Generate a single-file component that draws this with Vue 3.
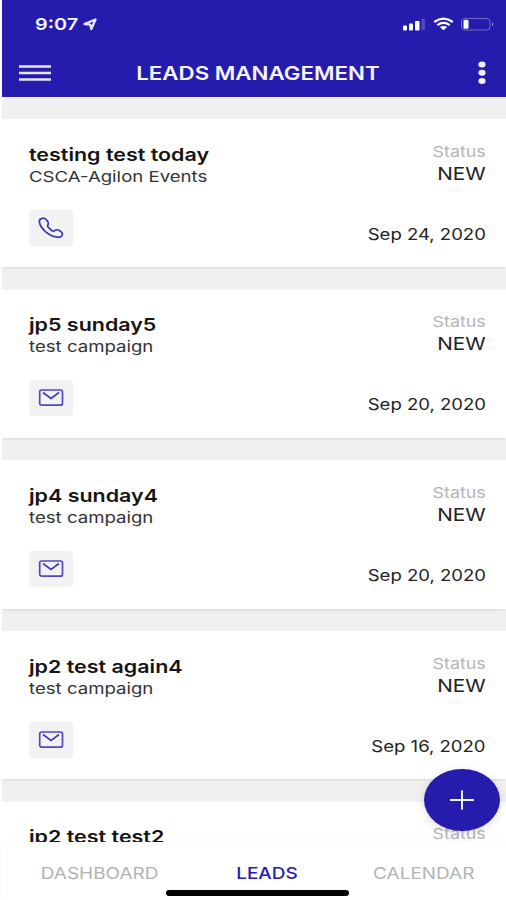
<script setup>
const leads = [
  { name: 'testing test today', campaign: 'CSCA-Agilon Events', date: 'Sep 24, 2020', channel: 'phone' },
  { name: 'jp5 sunday5', campaign: 'test campaign', date: 'Sep 20, 2020', channel: 'mail' },
  { name: 'jp4 sunday4', campaign: 'test campaign', date: 'Sep 20, 2020', channel: 'mail' },
  { name: 'jp2 test again4', campaign: 'test campaign', date: 'Sep 16, 2020', channel: 'mail' },
  { name: 'jp2 test test2', campaign: '', date: '', channel: 'mail' },
]
</script>

<template>
  <div class="screen">
    <header class="top">
      <div class="statusbar">
        <span class="time wide">9:07</span>
        <svg class="loc" viewBox="0 0 14 13"><path d="M1.500 6 12.500 1.500 8.300 11 7.300 6.700Z" fill="none" stroke="#e9e9fb" stroke-width="2.300" stroke-linejoin="round" /></svg>
        <svg class="signals" viewBox="0 0 94 16">
          <g fill="#fff">
            <rect x="2" y="9.500" width="4" height="5" rx="1" />
            <rect x="8" y="7.500" width="4" height="7" rx="1" />
            <rect x="14" y="5" width="4.500" height="9.500" rx="1" />
            <rect x="20.500" y="2.500" width="3.500" height="12" rx="1" opacity=".2" />
          </g>
          <g fill="none" stroke="#fff" stroke-width="2.200">
            <path d="M33.200 6Q42.500-.8 51.800 6" />
            <path d="M36.300 9.100Q42.500 4.800 48.700 9.100" />
          </g>
          <path d="M38.800 11Q42.500 8.800 46.200 11L42.500 14.200Z" fill="#fff" />
          <rect x="60.500" y="2.500" width="28.500" height="11.500" rx="3" fill="none" stroke="#fff" opacity=".34" />
          <rect x="62.500" y="3.800" width="5" height="9" rx="1.500" fill="#fff" />
          <path d="M91 6.300Q93.500 8.300 91 10.300Z" fill="#fff" opacity=".5" />
        </svg>
      </div>
      <div class="navbar">
        <svg class="menu" viewBox="0 0 32 18"><path d="M0 2.500H32M0 9H32M0 15.500H32" stroke="#e6e5fa" stroke-width="2.300" /></svg>
        <h1 class="title wide">LEADS MANAGEMENT</h1>
        <svg class="more" viewBox="0 0 8 24"><g fill="#f1f0ff"><ellipse cx="4" cy="3.500" rx="3.600" ry="3" /><ellipse cx="4" cy="11.800" rx="3.600" ry="3" /><ellipse cx="4" cy="20" rx="3.600" ry="3" /></g></svg>
      </div>
    </header>

    <main class="list">
      <article v-for="lead in leads" :key="lead.name" class="card">
        <div class="row">
          <div class="who">
            <h2 class="name wide">{{ lead.name }}</h2>
            <p class="campaign wide">{{ lead.campaign }}</p>
          </div>
          <div class="state">
            <span class="label wide">Status</span>
            <span v-if="lead.date" class="value wide">NEW</span>
          </div>
        </div>
        <div v-if="lead.date" class="row foot">
          <button class="channel" :aria-label="lead.channel">
            <svg v-if="lead.channel === 'phone'" viewBox="0 0 26 22"><path d="M4.300 1.300C2.200 1.800 1.100 3.200 1.400 5C2.500 11.500 10.500 19 19.300 20.200C21.600 20.500 23.700 19.600 24.400 17.700C24.700 16.500 24.100 15.500 23 14.700L21.200 13.400C20.100 12.600 19 12.600 17.900 13.100L15.900 14C15.200 14.300 14.600 14.100 13.800 13.500C12.400 12.400 11 11.200 10 9.900C9.500 9.200 9.500 8.700 9.900 8C10.500 6.700 10.500 5.700 9.700 4.500L8 2.300C7 1.100 5.700.900 4.300 1.300Z" fill="none" stroke="#3d34b6" stroke-width="1.700" /></svg>
            <svg v-else viewBox="0 0 26 22"><rect x="1.700" y="3" width="22.800" height="15.200" rx="2" fill="none" stroke="#5048c0" stroke-width="1.700" /><path d="M5 5.500 13 11.500 21 5.500" fill="none" stroke="#4037b7" stroke-width="1.600" /></svg>
          </button>
          <time class="date wide">{{ lead.date }}</time>
        </div>
      </article>
    </main>

    <button class="add" aria-label="Add">
      <svg viewBox="0 0 76 62"><path d="M26 31H50M38 21.500V40.500" stroke="#f3f2ff" stroke-width="2" /></svg>
    </button>

    <nav class="tabs">
      <div class="links">
        <a class="tab"><span class="wide">DASHBOARD</span></a>
        <a class="tab active"><span class="wide">LEADS</span></a>
        <a class="tab"><span class="wide">CALENDAR</span></a>
      </div>
      <div class="home"></div>
    </nav>
  </div>
</template>

<style>
body { background: #fff; }
</style>

<style scoped>
* { box-sizing: border-box; margin: 0; padding: 0; }
.screen { position: relative; width: 506px; height: 900px; padding-left: 2px; overflow: hidden; display: flex; flex-direction: column; font-family: Inter, "Liberation Sans", sans-serif; color: #151515; }
.wide { display: block; white-space: nowrap; transform: scaleX(1.22); transform-origin: left center; }
svg { display: block; }
button { border: 0; }

.top { flex: none; height: 97px; background: #251cae; color: #f5f4ff; }
.statusbar { height: 48px; display: flex; align-items: center; padding: 0 11px 0 32.5px; }
.time { width: 48px; font-size: 16.5px; font-weight: 600; line-height: 20px; transform: scaleX(1.2); }
.loc { width: 14px; height: 13px; }
.signals { width: 94px; height: 16px; margin-left: auto; }
.navbar { height: 49px; display: flex; align-items: center; padding: 0 20px 0 17px; }
.menu { width: 32px; height: 18px; }
.title { flex: 1; margin-right: 13px; text-align: center; font-size: 18.5px; font-weight: 600; line-height: 24px; transform: scaleX(1.205); transform-origin: center; }
.more { width: 8px; height: 24px; margin-left: auto; }

.list { flex: 1; min-height: 0; overflow: hidden; background: #f0f0f0; padding-top: 22px; display: flex; flex-direction: column; gap: 22.3px; }
.card { flex: none; height: 148.4px; background: #fff; padding: 24.5px 20px 0 27px; box-shadow: 0 2px 3px -1px rgba(0, 0, 0, .11); }
.row { display: flex; justify-content: space-between; }
.name { font-size: 17.5px; font-weight: 600; line-height: 22px; transform: scaleX(1.225); }
.campaign { min-height: 22px; font-size: 15px; line-height: 22px; color: #333; transform: scaleX(1.24); }
.state { display: flex; flex-direction: column; align-items: flex-end; margin-top: -3px; }
.state .wide, .date { transform-origin: right center; }
.label { font-size: 15px; line-height: 22px; color: #b5b5b5; transform: scaleX(1.19); }
.value { font-size: 17px; line-height: 22px; color: #222; }
.foot { margin-top: 22px; }
.channel { width: 44px; height: 36px; border-radius: 4px; background: #f2f2f3; display: flex; align-items: center; justify-content: center; }
.channel svg { width: 26px; height: 22px; }
.date { font-size: 15.5px; line-height: 22px; margin-top: 14px; color: #222; transform: scaleX(1.195); }

.add { position: absolute; left: 424px; top: 768.5px; width: 76px; height: 62px; border-radius: 50%; background: #251cae; box-shadow: 0 2px 10px rgba(0, 0, 0, .14); z-index: 1; }
.tabs { flex: none; height: 58px; background: #fff; display: flex; flex-direction: column; align-items: center; box-shadow: 0 -1px 5px rgba(0, 0, 0, .03); }
.links { width: 100%; display: grid; grid-template-columns: 195px 139px 1fr; padding-top: 20px; height: 47px; }
.tab { display: flex; justify-content: center; font-size: 16px; line-height: 22px; color: #b2b2b2; }
.tab:last-child { padding-left: 6px; }
.tab .wide { transform: scaleX(1.185); transform-origin: center; }
.active { color: #251cae; font-weight: 500; }
.home { width: 183px; height: 6px; border-radius: 3px; background: #000; margin: 1px 0 0 7px; }
</style>
